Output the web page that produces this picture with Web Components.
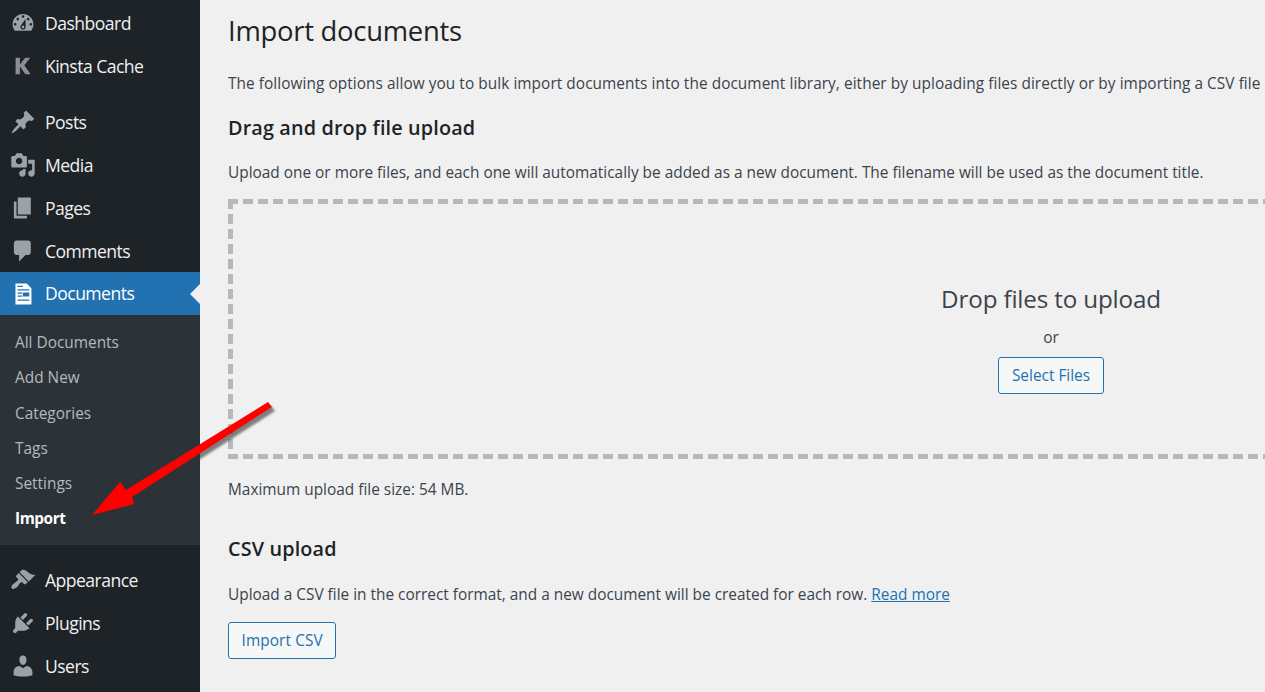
<!DOCTYPE html>
<html lang="en">
<head>
<meta charset="utf-8">
<title>Import documents</title>
<style>
  html, body { margin: 0; height: 692px; overflow: hidden; background: #f0f0f1; }
  body { font-family: "Open Sans", "Noto Sans", sans-serif; color: #3c434a; }
</style>
</head>
<body>
<admin-page>
  <admin-menu slot="menu">
    <menu-item icon="dashboard">Dashboard</menu-item>
    <menu-item icon="kinsta">Kinsta Cache</menu-item>
    <menu-sep></menu-sep>
    <menu-item icon="post">Posts</menu-item>
    <menu-item icon="media">Media</menu-item>
    <menu-item icon="page">Pages</menu-item>
    <menu-item icon="comment">Comments</menu-item>
    <menu-item icon="document" active>Documents</menu-item>
    <sub-menu>
      <sub-item>All Documents</sub-item>
      <sub-item>Add New</sub-item>
      <sub-item>Categories</sub-item>
      <sub-item>Tags</sub-item>
      <sub-item>Settings</sub-item>
      <sub-item current>Import</sub-item>
    </sub-menu>
    <menu-item icon="appearance">Appearance</menu-item>
    <menu-item icon="plugin">Plugins</menu-item>
    <menu-item icon="user">Users</menu-item>
  </admin-menu>

  <page-title>Import documents</page-title>
  <page-text class="intro">The following options allow you to bulk import documents into the document library, either by uploading files directly or by importing a CSV file</page-text>
  <section-title>Drag and drop file upload</section-title>
  <page-text class="upload-help">Upload one or more files, and each one will automatically be added as a new document. The filename will be used as the document title.</page-text>
  <drop-zone></drop-zone>
  <page-text class="max-size">Maximum upload file size: 54 MB.</page-text>
  <section-title class="csv">CSV upload</section-title>
  <page-text class="csv-help">Upload a CSV file in the correct format, and a new document will be created for each row. <a href="#">Read more</a></page-text>
  <wp-button class="csv-button">Import CSV</wp-button>
  <red-arrow slot="overlay"></red-arrow>
</admin-page>

<script>
const ICONS = {
  dashboard: '<path fill-rule="evenodd" d="M3.76 16h12.48c1.1-1.37 1.76-3.11 1.76-5 0-4.42-3.58-8-8-8s-8 3.58-8 8c0 1.89.66 3.63 1.76 5zM10 4c.55 0 1 .45 1 1s-.45 1-1 1-1-.45-1-1 .45-1 1-1zM6 6c.55 0 1 .45 1 1s-.45 1-1 1-1-.45-1-1 .45-1 1-1zm8 0c.55 0 1 .45 1 1s-.45 1-1 1-1-.45-1-1 .45-1 1-1zm-5.37 5.55L12 7v6c0 1.1-.9 2-2 2s-2-.9-2-2c0-.57.24-1.08.63-1.45zM4 10c.55 0 1 .45 1 1s-.45 1-1 1-1-.45-1-1 .45-1 1-1zm12 0c.55 0 1 .45 1 1s-.45 1-1 1-1-.45-1-1 .45-1 1-1zm-5 3c0-.55-.45-1-1-1s-1 .45-1 1 .45 1 1 1 1-.45 1-1z"/>',
  kinsta: '<path d="M4.3 3.6h3.3v5.2l4.1-5.2h3.9l-4.6 5.8 4.9 7h-4l-4.3-6v6H4.3z"/>',
  post: '<path d="M10.44 3.02l1.82-1.82 6.36 6.35-1.83 1.82c-1.05-.68-2.48-.57-3.41.36l-.75.75c-.92.93-1.04 2.35-.35 3.41l-1.83 1.82-2.41-2.41-2.8 2.79c-.42.42-3.38 2.71-3.79 2.3s1.88-3.37 2.3-3.79l2.79-2.8-2.41-2.41 1.82-1.83c1.06.69 2.48.57 3.41-.35l.75-.75c.93-.93 1.04-2.36.36-3.41z"/>',
  media: '<path fill-rule="evenodd" d="M13 11V4c0-.55-.45-1-1-1h-1.67L9 1H5L3.67 3H2c-.55 0-1 .45-1 1v7c0 .55.45 1 1 1h10c.55 0 1-.45 1-1zM7 4.5c1.38 0 2.5 1.12 2.5 2.5S8.38 9.5 7 9.5 4.5 8.38 4.5 7 5.62 4.5 7 4.5zM14 6h5v10.5c0 1.38-1.12 2.5-2.5 2.5S14 17.88 14 16.5s1.12-2.5 2.5-2.5c.17 0 .34.02.5.05V9h-3V6zm-4 8.05V13h2v3.5c0 1.38-1.12 2.5-2.5 2.5S7 17.88 7 16.5 8.12 14 9.5 14c.17 0 .34.02.5.05z"/>',
  page: '<path d="M6 15V2h10v13H6zm-1 1h8v2H3V5h2v11z"/>',
  comment: '<path d="M5 2h9c1.1 0 2 .9 2 2v7c0 1.1-.9 2-2 2h-2l-5 5v-5H5c-1.1 0-2-.9-2-2V4c0-1.1.9-2 2-2z"/>',
  document: '<path fill-rule="evenodd" d="M4.2 1.9h8.6l3.7 3.7V18H4.2zM5.8 3.6v1h4.2v-1zM5.8 6.4v1h9v-1zM5.8 8.9v1h3.4v-1zM9.8 8.8v3.2h5V8.8zM5.8 11.2v1h3.4v-1zM5.8 14.2v1h9v-1z"/>',
  appearance: '<path d="M14.48 11.06L7.41 3.99l1.5-1.5c.5-.56 2.3-.47 3.51.32 1.21.8 1.43 1.28 2.91 2.1 1.18.64 2.45 1.26 4.45.85zm-.71.71L6.7 4.7 4.93 6.47c-.39.39-.39 1.02 0 1.41l1.06 1.06c.39.39.39 1.03 0 1.42-.6.6-1.43 1.11-2.21 1.69-.35.26-.7.53-1.01.84C1.43 13.71.5 15.76 1.37 16.63c.87.87 2.92-.06 4.26-1.4.31-.31.58-.66.84-1.01.58-.78 1.09-1.61 1.69-2.21.39-.39 1.03-.39 1.42 0l1.06 1.06c.39.39 1.02.39 1.41 0z"/>',
  plugin: '<path d="M13.11 4.36L9.87 7.6 8 5.73l3.24-3.24c.35-.34 1.05-.2 1.56.32.52.51.66 1.21.31 1.55zm-8 1.77l.91-1.12 9.01 9.01-1.19.84c-.71.71-2.63 1.16-3.82 1.16H6.14L4.9 17.26c-.59.59-1.54.59-2.12 0-.59-.58-.59-1.53 0-2.12l1.24-1.24v-3.88c0-1.13.4-3.19 1.09-3.89zm7.26 3.97l3.24-3.24c.34-.35 1.04-.21 1.55.31.52.51.66 1.21.31 1.55l-3.24 3.25z"/>',
  user: '<path d="M10 9.25c-2.27 0-2.73-3.44-2.73-3.44C7 4.02 7.82 2 9.97 2c2.16 0 2.98 2.02 2.71 3.81 0 0-.41 3.44-2.68 3.44zm0 2.57L12.72 10c2.39 0 4.52 2.33 4.52 4.53v2.49s-3.65 1.13-7.24 1.13c-3.65 0-7.24-1.13-7.24-1.13v-2.49c0-2.25 1.94-4.48 4.47-4.48z"/>'
};

// small helper, every element is just a style block plus markup
function define(name, html) {
  customElements.define(name, class extends HTMLElement {
    constructor() {
      super();
      this.attachShadow({ mode: 'open' });
      this.shadowRoot.innerHTML = html;
    }
  });
}

define('admin-page', `
  <style>
    :host { display: grid; grid-template-columns: 200px 1fr; height: 692px; position: relative; overflow: hidden; }
    main { padding: 0 0 0 28px; min-width: 0; overflow: hidden; display: flex; flex-direction: column; align-items: flex-start; }
  </style>
  <slot name="menu"></slot>
  <main><slot></slot></main>
  <slot name="overlay"></slot>`);

define('admin-menu', `
  <style>
    :host { display: flex; flex-direction: column; background: #1d2327; padding-top: 1px; height: 691px; overflow: hidden; }
  </style>
  <slot></slot>`);

define('menu-sep', `<style>:host { display: block; height: 13px; flex: none; }</style>`);

class MenuItem extends HTMLElement {
  constructor() {
    super();
    this.attachShadow({ mode: 'open' });
    const name = this.getAttribute('icon');
    this.shadowRoot.innerHTML = `
      <style>
        :host { display: flex; align-items: center; height: 43px; flex: none; position: relative;
                color: #f0f0f1; font-size: 17.6px; letter-spacing: -0.55px; }
        :host([active]) { background: #2271b1; color: #fff; }
        svg { width: 26px; height: 26px; margin: 0 9.5px; fill: #9ca2a7; flex: none; }
        :host([icon="kinsta"]) svg { fill: #8c9094; }
        :host([active]) svg { fill: #fff; }
        :host([active])::after { content: ""; position: absolute; right: 0; top: 50%; margin-top: -10px;
                border: 10px solid transparent; border-right-color: #f0f0f1; border-left-width: 0; }
        span { display: block; }
        :host([active]) span { margin-top: -2px; }
      </style>
      <svg viewBox="0 0 20 20">${ICONS[name]}</svg>
      <span><slot></slot></span>`;
  }
}
customElements.define('menu-item', MenuItem);

define('sub-menu', `
  <style>
    :host { display: flex; flex-direction: column; flex: none; background: #2c3338; height: 230px; padding: 10.2px 0 0; margin-bottom: 13px; box-sizing: border-box; }
  </style>
  <slot></slot>`);

define('sub-item', `
  <style>
    :host { display: flex; align-items: center; height: 35.2px; flex: none; padding-left: 15px;
            color: #b4b9be; font-size: 15.4px; }
    :host([current]) { color: #fff; font-weight: 700; letter-spacing: -0.45px; }
  </style>
  <slot></slot>`);

define('page-title', `
  <style>
    :host { display: block; font-size: 27.4px; line-height: 36px; margin-top: 13px; color: #1d2327; letter-spacing: -0.25px; white-space: nowrap; }
  </style>
  <slot></slot>`);

define('section-title', `
  <style>
    :host { display: block; font-size: 19.8px; line-height: 26px; font-weight: 600; color: #1d2327; letter-spacing: 0.15px; white-space: nowrap; margin-top: 20px; }
    :host(.csv) { margin-top: 35px; }
  </style>
  <slot></slot>`);

define('page-text', `
  <style>
    :host { display: block; font-size: 15.4px; line-height: 22px; color: #3c434a; white-space: nowrap; }
    :host(.intro) { margin-top: 24px; letter-spacing: 0.055px; }
    :host(.upload-help) { margin-top: 21px; }
    :host(.max-size) { margin-top: 20px; }
    :host(.csv-help) { margin-top: 22px; }
    ::slotted(a) { color: #2271b1; text-decoration: underline; }
  </style>
  <slot></slot>`);

define('wp-button', `
  <style>
    :host { display: inline-flex; align-items: center; justify-content: center; box-sizing: border-box; height: 37px; padding: 0 12.5px;
            border: 1px solid #2271b1; border-radius: 3px; background: #f6f7f7; color: #2271b1;
            font-size: 15.4px; white-space: nowrap; flex: none; }
    :host(.csv-button) { margin-top: 16px; letter-spacing: 0.1px; }
  </style>
  <slot></slot>`);

// the dashes are 10 on, 5 off, starting at the corner, which a css dashed border can't do
define('drop-zone', `
  <style>
    :host { --dash: repeating-linear-gradient(90deg, #b4b9be 0 10px, transparent 10px 15px);
            --dash-v: repeating-linear-gradient(180deg, #b4b9be 0 10px, transparent 10px 15px);
            display: flex; flex-direction: column; align-items: center; box-sizing: border-box; width: 1646px; height: 260px; flex: none;
            margin-top: 15px; padding-top: 82px;
            background: var(--dash) top left / 100% 5px no-repeat, var(--dash) bottom left / 100% 5px no-repeat, var(--dash-v) top left / 5px 100% no-repeat; }
    .drop { font-size: 24.2px; line-height: 36px; color: #3c434a; letter-spacing: -0.15px; }
    .or { font-size: 15.4px; line-height: 22px; margin-top: 10px; color: #3c434a; }
    wp-button { margin-top: 8px; }
  </style>
  <div class="drop">Drop files to upload</div>
  <div class="or">or</div>
  <wp-button>Select Files</wp-button>`);

define('red-arrow', `
  <style>
    :host { position: absolute; left: 0; top: 0; width: 1265px; height: 692px; pointer-events: none; display: block; }
    svg { display: block; }
  </style>
  <svg width="1265" height="692" viewBox="0 0 1265 692">
    <defs><filter id="soft" x="-10%" y="-10%" width="120%" height="120%"><feGaussianBlur stdDeviation="0.8"/></filter></defs>
    <path d="M268 402L272 407L132 497L134 504L92 515L120 482L126 490Z" fill="#333" opacity=".6" transform="translate(3 4)" filter="url(#soft)"/>
    <path d="M268 402L272 407L132 497L134 504L92 515L120 482L126 490Z" fill="#fe0000"/>
  </svg>`);
</script>
</body>
</html>
